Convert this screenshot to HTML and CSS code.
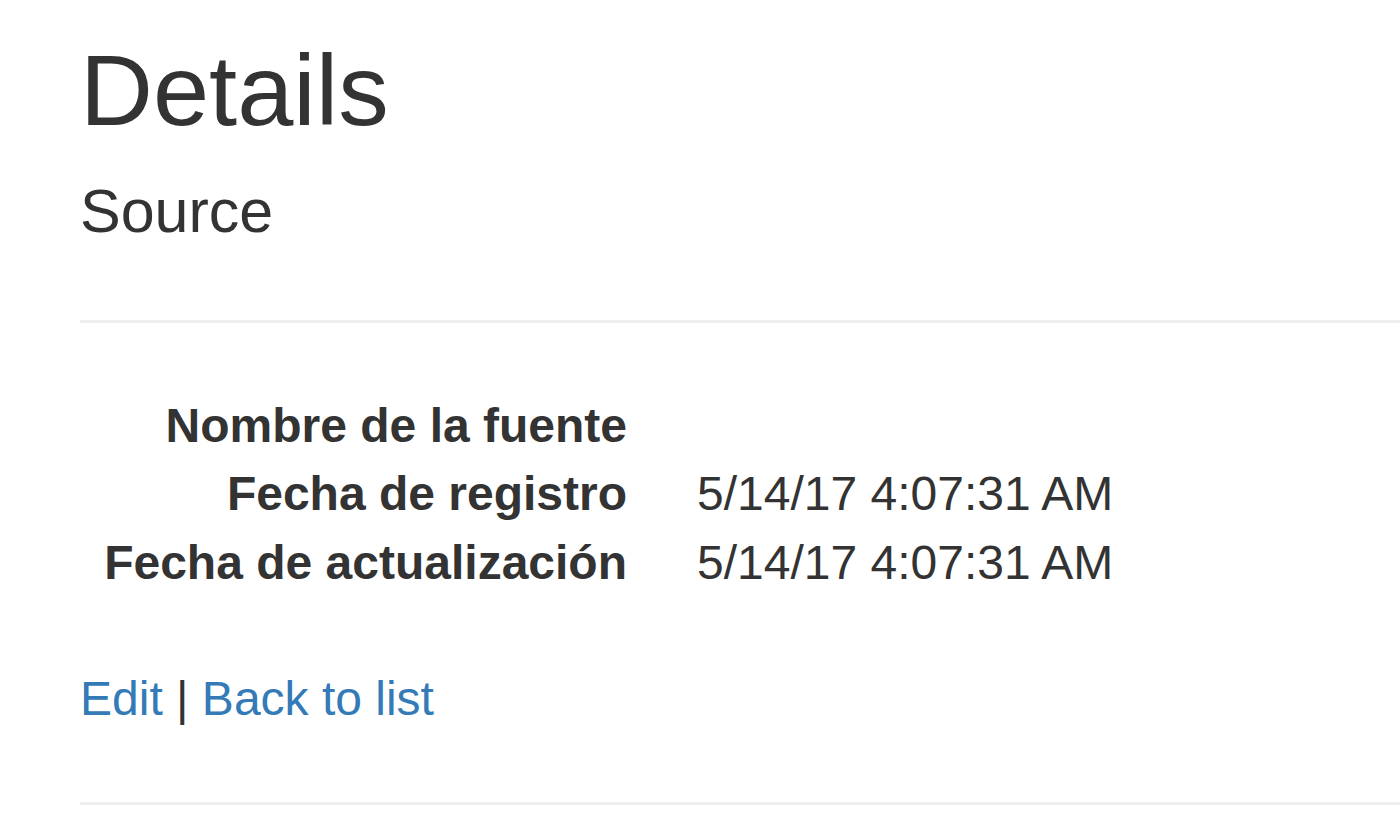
FILE: index.html
```html
<!DOCTYPE html>
<html lang="es">
<head>
<meta charset="utf-8">
<title>Details</title>
<link rel="stylesheet" href="styles.css">
</head>
<body>
<div class="page">
  <h2 class="title">Details</h2>
  <div>
    <h4 class="subtitle">Source</h4>
    <hr class="rule rule-top">
    <dl class="details">
      <div class="row"><dt>Nombre de la fuente</dt><dd></dd></div>
      <div class="row"><dt>Fecha de registro</dt><dd>5/14/17 4:07:31 AM</dd></div>
      <div class="row"><dt>Fecha de actualización</dt><dd>5/14/17 4:07:31 AM</dd></div>
    </dl>
  </div>
  <p class="actions"><a href="#">Edit</a> | <a href="#">Back to list</a></p>
  <hr class="rule rule-bottom">
</div>
</body>
</html>
```

FILE: styles.css
```css
html, body {
  margin: 0;
  padding: 0;
  background: #ffffff;
  overflow: hidden;
}
body {
  font-family: "Liberation Sans", Arial, sans-serif;
  color: #333333;
  font-size: 48px;
  line-height: 68.4px;
}
.page {
  padding: 34px 0 0 80px;
}
.title {
  margin: 0 0 31px 0;
  font-size: 101px;
  line-height: 112px;
  font-weight: 400;
}
.subtitle {
  margin: 0 0 75px 0;
  font-size: 61px;
  line-height: 68px;
  font-weight: 400;
}
.rule {
  border: 0;
  height: 3px;
  background: #eeeeee;
  margin: 0;
}
.rule-top {
  margin-bottom: 69px;
}
.details {
  margin: 0 0 68px 0;
  display: flex;
  flex-direction: column;
}
.row {
  display: flex;
}
.row dt {
  width: 547px;
  flex: none;
  text-align: right;
  font-weight: 700;
  white-space: nowrap;
}
.row dd {
  margin: 0 0 0 70px;
  white-space: nowrap;
}
.actions {
  margin: 0 0 68px 0;
}
.actions a {
  color: #337ab7;
  text-decoration: none;
}
```
